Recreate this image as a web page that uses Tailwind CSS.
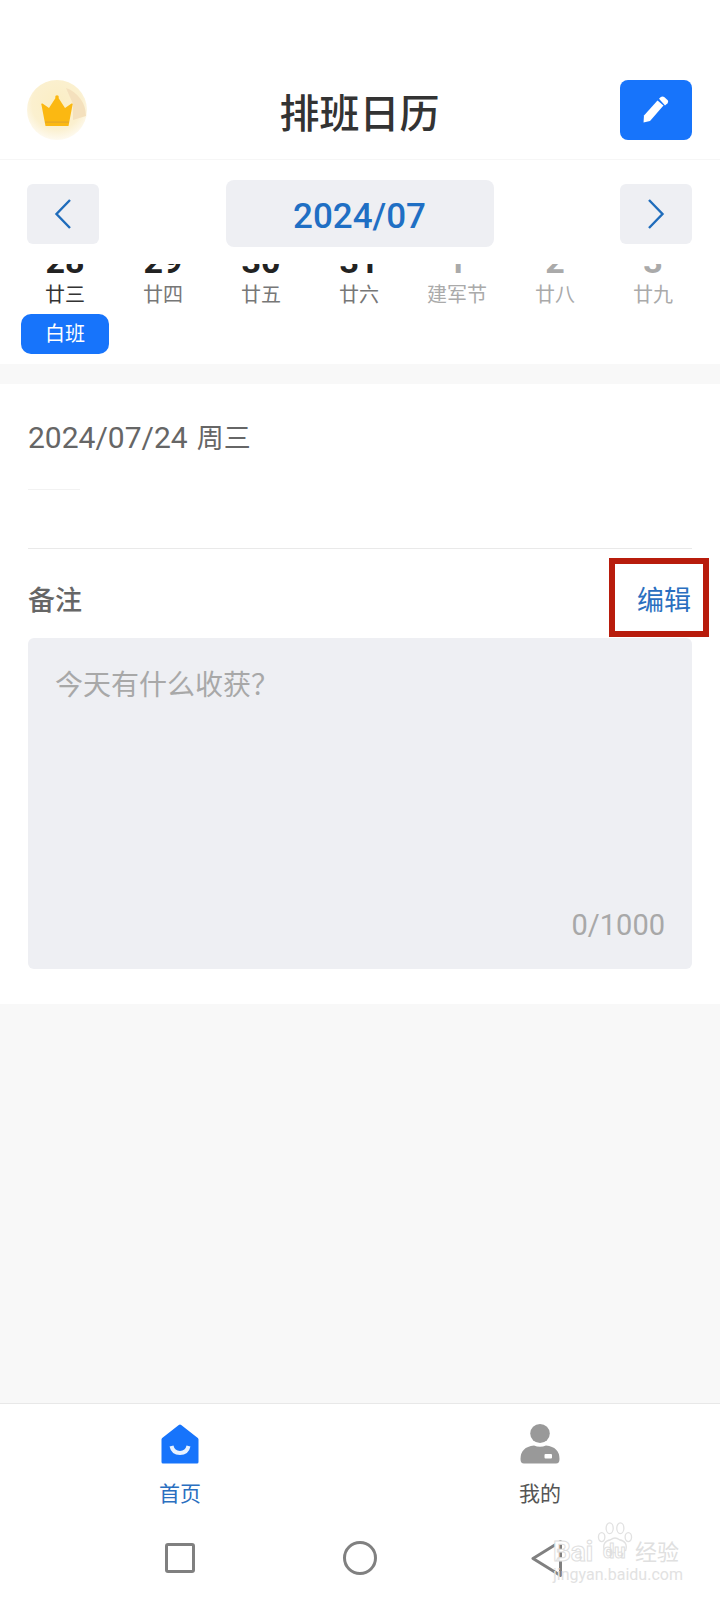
<!doctype html>
<html lang="zh-CN">
  <head>
    <title>排班日历</title>
    <meta charset="utf-8">
    <meta name="viewport" content="width=device-width, initial-scale=1">
    <script src="https://cdn.jsdelivr.net/npm/@tailwindcss/browser@4"></script>
  </head>
  <body class="m-0 p-0 bg-white [font-family:Roboto,'Noto_Sans_CJK_SC',sans-serif]">
  <main class="relative w-[720px] h-[1600px] flex flex-col overflow-hidden">

    <!-- title bar -->
    <header class="h-[160px] pt-[80px] pl-[27px] pr-[28px] grid grid-cols-[1fr_auto_1fr] items-start border-b border-[#f6f6f6]">
      <div class="w-[60px] h-[60px]">
        <svg viewBox="0 0 60 60" class="w-full h-full">
          <defs>
            <radialGradient id="avatarBg" cx="50%" cy="40%" r="60%">
              <stop offset="0" stop-color="#fbeec4"/>
              <stop offset="0.7" stop-color="#fbf0cf"/>
              <stop offset="1" stop-color="#fefaf0"/>
            </radialGradient>
          </defs>
          <circle cx="30" cy="30" r="30" fill="url(#avatarBg)"/>
          <path d="M39 8 A30 30 0 0 1 59 36 L46 40 L46 24 Z" fill="#f4e0bd"/>
          <path d="M14.5 25 Q13.5 23 15.5 23.5 L22 28 L28.5 18 Q30 15.5 31.5 18 L38 28 L44.5 23.5 Q46.5 23 45.5 25 L41.5 46 H18.5 Z" fill="#fbb812"/>
          <circle cx="30" cy="17" r="1.8" fill="#fbb812"/>
          <rect x="18" y="41.5" width="24" height="1.2" fill="#e0a52c"/>
        </svg>
      </div>
      <h1 class="m-0 text-[40px] leading-[70px] font-medium text-[#333]">排班日历</h1>
      <button class="justify-self-end w-[72px] h-[60px] rounded-[8px] bg-[#1774fb] flex items-center justify-center">
        <svg viewBox="0 0 28 28" class="w-[28px] h-[28px]">
          <path d="M1.5 26.5 L2 19.5 L15.5 4.5 L21.5 9.5 L8 25 Z" fill="#fff"/>
          <path d="M17 2.8 L18.8 1 Q20.5 -.2 22.2 1 L25.5 4 Q26.8 5.6 25.5 7.2 L23 9.4 Z" fill="#fff"/>
        </svg>
      </button>
    </header>

    <!-- month switch -->
    <div class="h-[104px] pt-[20px] pl-[27px] pr-[28px] flex justify-between items-start">
      <button class="mt-[4px] w-[72px] h-[60px] rounded-[6px] bg-[#eeeff3] flex items-center justify-center">
        <svg viewBox="0 0 18 32" class="w-[18px] h-[32px]"><path d="M16 2 L2.5 16 L16 30" fill="none" stroke="#1f6cbb" stroke-width="2.4"/></svg>
      </button>
      <div class="w-[268px] h-[67px] pt-[8px] rounded-[8px] bg-[#eeeff3] flex items-center justify-center text-[35px] font-medium text-[#1f6fc4]">2024/07</div>
      <button class="mt-[4px] w-[72px] h-[60px] rounded-[6px] bg-[#eeeff3] flex items-center justify-center">
        <svg viewBox="0 0 18 32" class="w-[18px] h-[32px]"><path d="M2 2 L15.5 16 L2 30" fill="none" stroke="#1f6cbb" stroke-width="2.4"/></svg>
      </button>
    </div>

    <!-- calendar strip, week numbers cut off by the month bar -->
    <section class="h-[100px]">
      <div class="grid grid-cols-7 pl-[16px] pr-[18px] text-center">
        <div><div class="h-[12px] overflow-hidden flex justify-center items-end text-[34px] leading-[30px] font-bold text-[#222]">28</div><div class="mt-[6px] text-[20px] leading-[26px] text-[#333]">廿三</div></div>
        <div><div class="h-[12px] overflow-hidden flex justify-center items-end text-[34px] leading-[30px] font-bold text-[#222]">29</div><div class="mt-[6px] text-[20px] leading-[26px] text-[#777]">廿四</div></div>
        <div><div class="h-[12px] overflow-hidden flex justify-center items-end text-[34px] leading-[30px] font-bold text-[#222]">30</div><div class="mt-[6px] text-[20px] leading-[26px] text-[#777]">廿五</div></div>
        <div><div class="h-[12px] overflow-hidden flex justify-center items-end text-[34px] leading-[30px] font-bold text-[#222]">31</div><div class="mt-[6px] text-[20px] leading-[26px] text-[#777]">廿六</div></div>
        <div><div class="h-[12px] overflow-hidden flex justify-center items-end text-[34px] leading-[30px] font-bold text-[#aaa]">1</div><div class="mt-[6px] text-[20px] leading-[26px] text-[#aaa]">建军节</div></div>
        <div><div class="h-[12px] overflow-hidden flex justify-center items-end text-[34px] leading-[30px] font-bold text-[#aaa]">2</div><div class="mt-[6px] text-[20px] leading-[26px] text-[#aaa]">廿八</div></div>
        <div><div class="h-[12px] overflow-hidden flex justify-center items-end text-[34px] leading-[30px] font-bold text-[#aaa]">3</div><div class="mt-[6px] text-[20px] leading-[26px] text-[#aaa]">廿九</div></div>
      </div>
      <div class="ml-[21px] mt-[6px] w-[88px] h-[40px] rounded-[10px] bg-[#1774fb] text-white text-[20px] flex items-center justify-center">白班</div>
    </section>

    <div class="h-[20px] bg-[#f8f8f8]"></div>

    <!-- day detail -->
    <section class="h-[620px] px-[28px] relative">
      <p class="m-0 pt-[34px] text-[30px] leading-[40px] text-[#666]">2024/07/24<span class="ml-[9px] text-[27px]">周三</span></p>
      <div class="mt-[30px] w-[52px] h-px bg-[#f2f2f2]"></div>
      <div class="mt-[58px] h-px bg-[#e9e9e9]"></div>
      <div class="h-[89px] pt-[16px] flex justify-between items-center">
        <span class="text-[27px] font-medium text-[#666]">备注</span>
        <span class="text-[27px] text-[#2a6fc0] mr-px">编辑</span>
      </div>
      <!-- red marker drawn over the screenshot -->
      <div class="absolute left-[609px] top-[174px] w-[100px] h-[79px] border-[6px] border-[#b81c0c]"></div>
      <div class="h-[331px] rounded-[6px] bg-[#eeeff3] px-[27px] pt-[28px] flex flex-col justify-between pb-[27px]">
        <span class="text-[28px] leading-[40px] text-[#a8a8a8]">今天有什么收获？</span>
        <span class="self-end text-[29px] leading-[34px] text-[#a8a8a8]">0/1000</span>
      </div>
    </section>

    <div class="grow bg-[#f8f8f8]"></div>

    <!-- tab bar -->
    <nav class="h-[137px] border-t border-[#e8e8e8] grid grid-cols-2 text-center">
      <div class="flex flex-col items-center pt-[20px]">
        <svg viewBox="0 0 38 40" class="w-[38px] h-[40px]">
          <path d="M17.8 1 Q19 -.2 20.2 1 L36.8 14 Q37.5 14.6 37.5 15.5 V38 Q37.5 39.5 36 39.5 H2 Q.5 39.5 .5 38 V15.5 Q.5 14.6 1.2 14 Z" fill="#1774fb"/>
          <path d="M10.5 22 Q12 29 19 29 Q26 29 27.5 22" fill="none" stroke="#e8f2ff" stroke-width="4"/>
        </svg>
        <span class="mt-[16px] text-[21px] leading-[28px] text-[#2a6fc0]">首页</span>
      </div>
      <div class="flex flex-col items-center pt-[20px]">
        <svg viewBox="0 0 40 40" class="w-[40px] h-[40px]">
          <ellipse cx="20" cy="9.5" rx="9.8" ry="9.5" fill="#999"/>
          <path d="M0.5 35 Q0.5 23 14 21.5 Q20 24 26 21.5 Q39.5 23 39.5 35 Q39.5 39.5 36 39.5 H4 Q.5 39.5 .5 35 Z" fill="#999"/>
          <rect x="24.5" y="30" width="7.5" height="4.5" rx="1" fill="#fff"/>
        </svg>
        <span class="mt-[16px] text-[21px] leading-[28px] text-[#555]">我的</span>
      </div>
    </nav>

    <!-- android nav buttons -->
    <div class="h-[60px] flex items-start">
      <div class="ml-[165px] mt-[3px] w-[30px] h-[30px] border-[3px] border-[#808080] rounded-[3px]"></div>
      <div class="ml-[148px] mt-[1px] w-[34px] h-[34px] border-[3px] border-[#808080] rounded-full"></div>
      <svg viewBox="0 0 32 37" class="ml-[154px] w-[32px] h-[37px]">
        <path d="M29.5 1.5 L2 18.5 L29.5 35.5 Z" fill="none" stroke="#808080" stroke-width="3" stroke-linejoin="round"/>
      </svg>
    </div>

    <!-- watermark -->
    <div class="absolute left-[553px] top-[1522px] w-[130px] h-[72px]">
      <svg viewBox="0 0 40 36" class="absolute left-[43px] top-0 w-[38px] h-[32px]">
        <g fill="#fff" stroke="#e2e2e2" stroke-width="1.5">
          <ellipse cx="5" cy="17" rx="3.6" ry="5"/>
          <ellipse cx="14" cy="7" rx="4" ry="6"/>
          <ellipse cx="26" cy="7" rx="4" ry="6"/>
          <ellipse cx="35" cy="17" rx="3.6" ry="5"/>
          <path d="M8 32 Q5 22 15 20 Q20 16 25 20 Q35 22 32 32 Q20 37 8 32 Z"/>
        </g>
      </svg>
      <span class="absolute left-0 top-[15px] text-[28px] leading-[30px] font-bold text-white [-webkit-text-stroke:1px_#dedede]">Bai</span>
      <span class="absolute left-[50px] top-[18px] text-[20px] leading-[22px] font-bold text-white [-webkit-text-stroke:1px_#dedede]">du</span>
      <span class="absolute left-[82px] top-[18px] text-[22px] leading-[26px] text-[#e0e0e0]">经验</span>
      <span class="absolute left-0 top-[43px] whitespace-nowrap text-[16px] leading-[20px] text-[#e2e2e2]">jingyan.baidu.com</span>
    </div>
  </main>
  </body>
</html>
